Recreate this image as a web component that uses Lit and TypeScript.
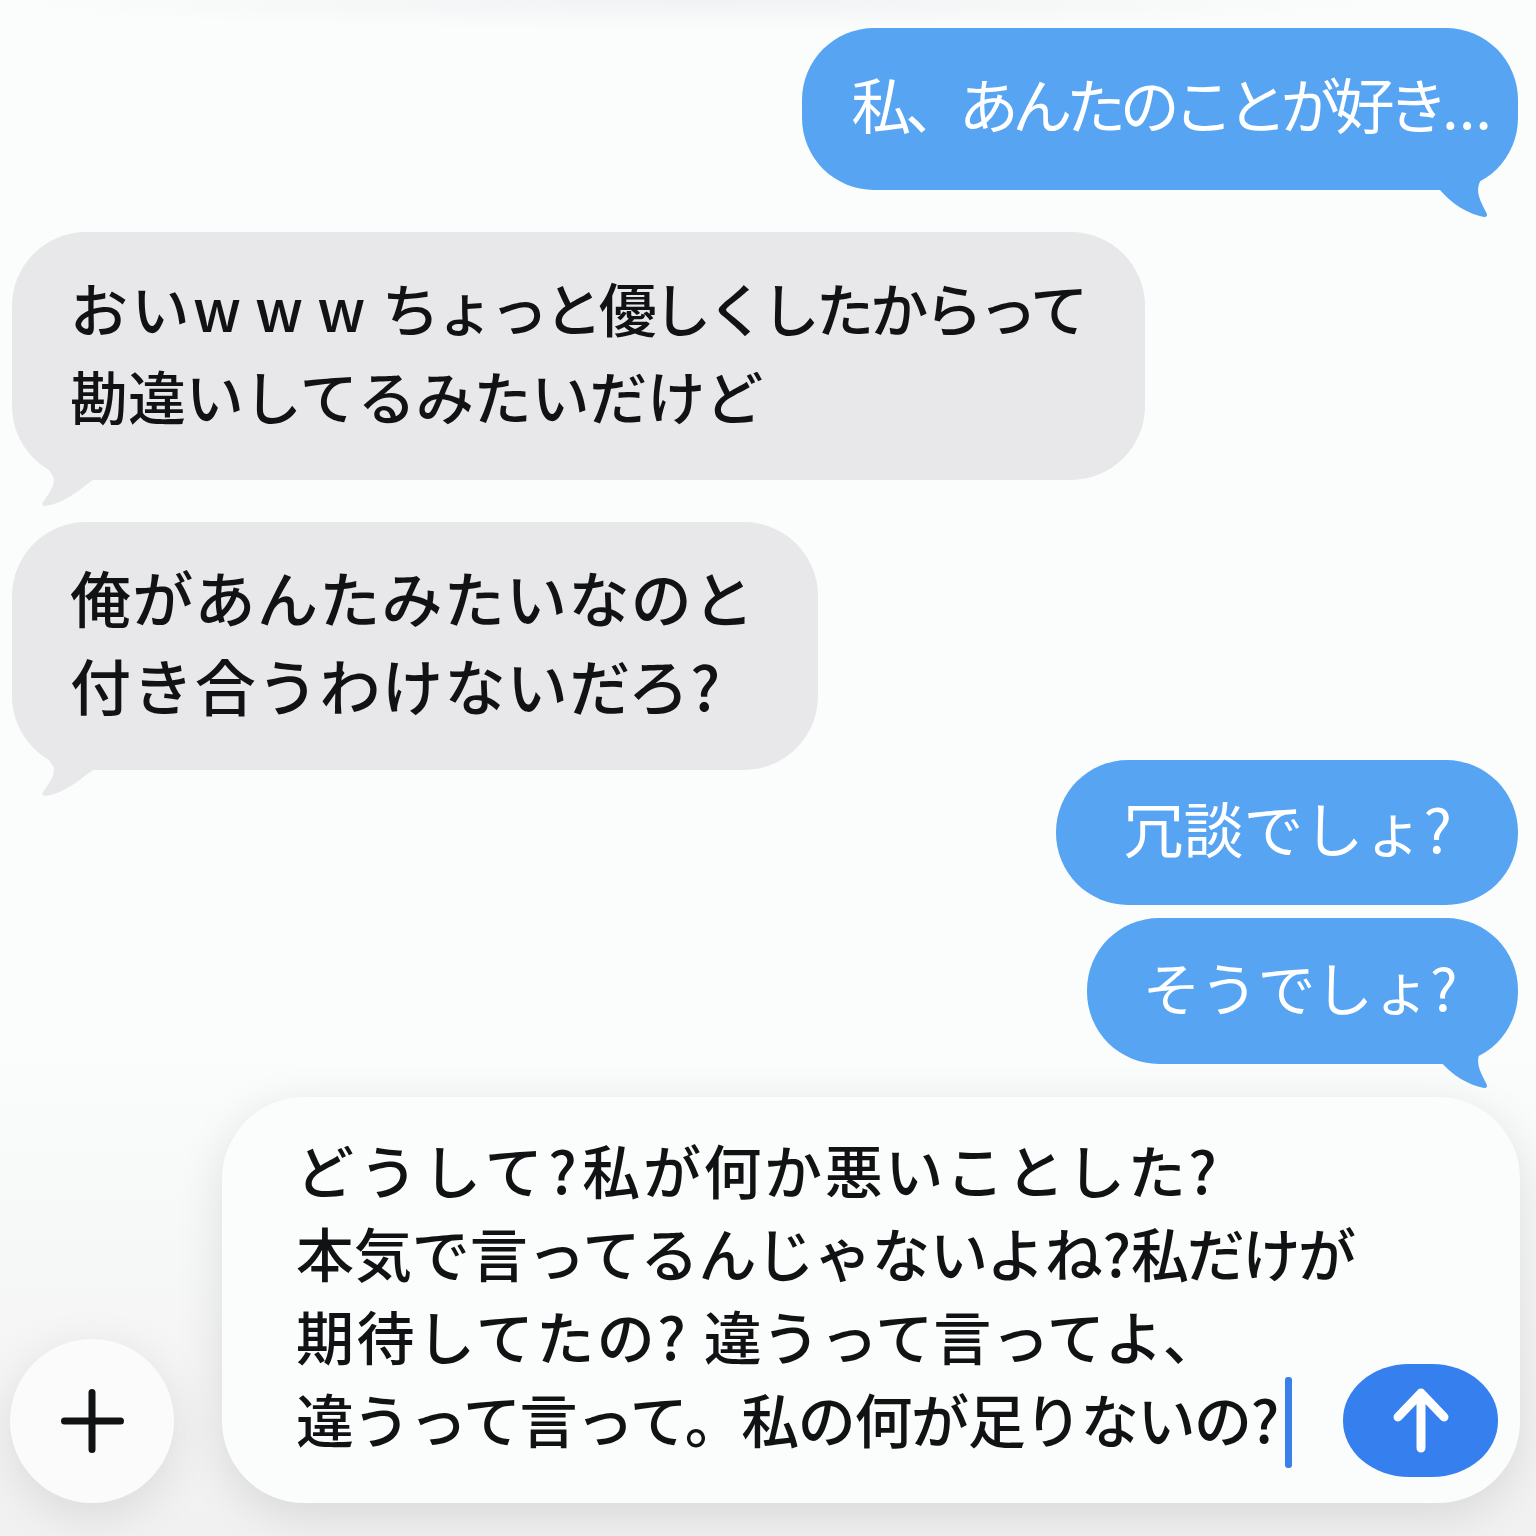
import { LitElement, html, css, svg } from "lit";
import { customElement } from "lit/decorators.js";

const TAIL_RIGHT = svg`<path d="M12 40 C24 54 40 64 56 67 Q61 67 58 62 C52 50 46 40 54 28 L72 10 L12 10 Z" />`;
const TAIL_LEFT = svg`<path d="M63 31 C50 40 36 54 15 57 Q11 57 13 53 C21 42 26 34 23 27 L5 0 L63 0 Z" />`;

// each run is [text, letter spacing in px]
type Run = [string, number];

const runs = (line: Run[]) =>
  html`${line.map(([text, gap]) => html`<span style="letter-spacing: ${gap}px">${text}</span>`)}`;

@customElement("app-root")
export class AppRoot extends LitElement {
  static styles = css`
    :host {
      display: block;
      width: 1536px;
      height: 1536px;
      overflow: hidden;
      font-family: "Noto Sans CJK JP", "Noto Sans", sans-serif;
      font-weight: 500;
      color: #111214;
    }

    .page {
      height: 1536px;
      box-sizing: border-box;
      padding: 28px 18px 0 12px;
      display: flex;
      flex-direction: column;
      background:
        radial-gradient(ellipse 700px 30px at 700px 0, #f1f2f3, transparent),
        linear-gradient(#fbfcfc 1040px, #f1f1f2 1536px);
    }

    .bubble {
      position: relative;
      box-sizing: border-box;
      font-size: 58px;
      line-height: 88px;
      white-space: nowrap;
    }

    .line {
      display: block;
    }

    .sent {
      align-self: flex-end;
      background: #57a5f2;
      color: #fff;
      font-weight: 400;
      border-radius: 72px;
    }

    .received {
      align-self: flex-start;
      background: #e8e8ea;
      padding: 31px 60px 41px 58px;
      border-radius: 74px;
      margin-top: 42px;
    }

    .tail {
      position: absolute;
      width: 90px;
      height: 70px;
      overflow: visible;
    }

    .sent .tail {
      right: 0;
      bottom: -30px;
      fill: #57a5f2;
    }

    .received .tail {
      left: 18px;
      bottom: -39px;
      fill: #e8e8ea;
    }

    .love {
      padding: 31px 26px 43px 49px;
      font-size: 60px;
    }

    .wide {
      padding-right: 63px;
      font-size: 61px;
    }

    .joke {
      margin-top: -10px;
      padding: 23px 66px 34px 68px;
      font-size: 60px;
    }

    .sure {
      margin-top: 13px;
      padding: 24px 61px 34px 56px;
    }

    .sure .tail {
      bottom: -27px;
    }

    .composer-row {
      margin-top: 33px;
      display: flex;
      align-items: flex-end;
      justify-content: space-between;
      margin-left: -2px;
      margin-right: -2px;
    }

    .plus {
      width: 164px;
      height: 164px;
      border-radius: 50%;
      background: #fbfbfb;
      box-shadow: 0 12px 48px rgba(0, 0, 0, 0.1);
      display: flex;
      align-items: center;
      justify-content: center;
    }

    .plus svg {
      width: 64px;
      height: 66px;
      stroke: #111214;
      stroke-width: 7;
      stroke-linecap: round;
    }

    .composer {
      width: 1298px;
      height: 406px;
      box-sizing: border-box;
      padding: 31px 22px 26px 74px;
      border-radius: 82px;
      background: #fbfcfc;
      box-shadow: 0 12px 48px rgba(0, 0, 0, 0.11);
      display: flex;
      justify-content: space-between;
      align-items: flex-end;
      font-size: 58px;
      line-height: 83px;
      white-space: nowrap;
    }

    .draft {
      flex: 1;
      min-width: 0;
      align-self: flex-start;
    }

    .caret {
      display: inline-block;
      width: 7px;
      height: 91px;
      margin: -10px 0 -10px 7px;
      border-radius: 3px;
      background: #3a80e8;
      vertical-align: -14.5px;
    }

    .send {
      width: 155px;
      height: 113px;
      flex: none;
      border-radius: 66px / 56px;
      background: #3580ee;
      display: flex;
      align-items: center;
      justify-content: center;
    }

    .send svg {
      width: 60px;
      height: 70px;
      fill: none;
      stroke: #fff;
      stroke-width: 9;
      stroke-linecap: round;
      stroke-linejoin: round;
    }
  `;

  protected render() {
    return html`
      <div class="page">
        <div class="bubble sent love">
          <span class="line">${runs([["私、あんたのことが好き", -6.3], ["...", 0]])}</span>
          <svg class="tail" viewBox="0 0 90 70">${TAIL_RIGHT}</svg>
        </div>
        <div class="bubble received">
          <span class="line">${runs([["おい", 3.5], ["ww", 14], ["w", 7], [" ちょっと優しくしたからって", -3.7]])}</span>
          <span class="line">${runs([["勘違いしてるみたいだけど", -0.1]])}</span>
          <svg class="tail" viewBox="0 0 90 70">${TAIL_LEFT}</svg>
        </div>
        <div class="bubble received wide">
          <span class="line">${runs([["俺があんたみたいなのと", 1.3]])}</span>
          <span class="line">${runs([["付き合うわけないだろ?", 1.4]])}</span>
          <svg class="tail" viewBox="0 0 90 70">${TAIL_LEFT}</svg>
        </div>
        <div class="bubble sent joke"><span class="line">冗談でしょ?</span></div>
        <div class="bubble sent sure">
          <span class="line">${runs([["そうでしょ?", -0.5]])}</span>
          <svg class="tail" viewBox="0 0 90 70">${TAIL_RIGHT}</svg>
        </div>
        <div class="composer-row">
          <div class="plus">
            <svg viewBox="0 0 64 66"><path d="M32 4.5V61.5M4.5 33H60.5" /></svg>
          </div>
          <div class="composer">
            <div class="draft">
              <span class="line">${runs([["どうして?", 5.5], ["私が何か悪いことした?", 2.6]])}</span>
              <span class="line">${runs([["本気で言ってるんじゃないよね?", -0.1], ["私だけが", -2.3]])}</span>
              <span class="line">${runs([["期待してたの? ", 2.5], ["違うって言ってよ、", 0.1]])}</span>
              <span class="line">${runs([["違うって言って。", -1.4], ["私の何が足りないの?", -1.4]])}<i class="caret"></i></span>
            </div>
            <div class="send">
              <svg viewBox="0 0 60 70"><path d="M30 62V7M7 31L30 7L53 31" /></svg>
            </div>
          </div>
        </div>
      </div>
    `;
  }
}

declare global {
  interface HTMLElementTagNameMap {
    "app-root": AppRoot;
  }
}
